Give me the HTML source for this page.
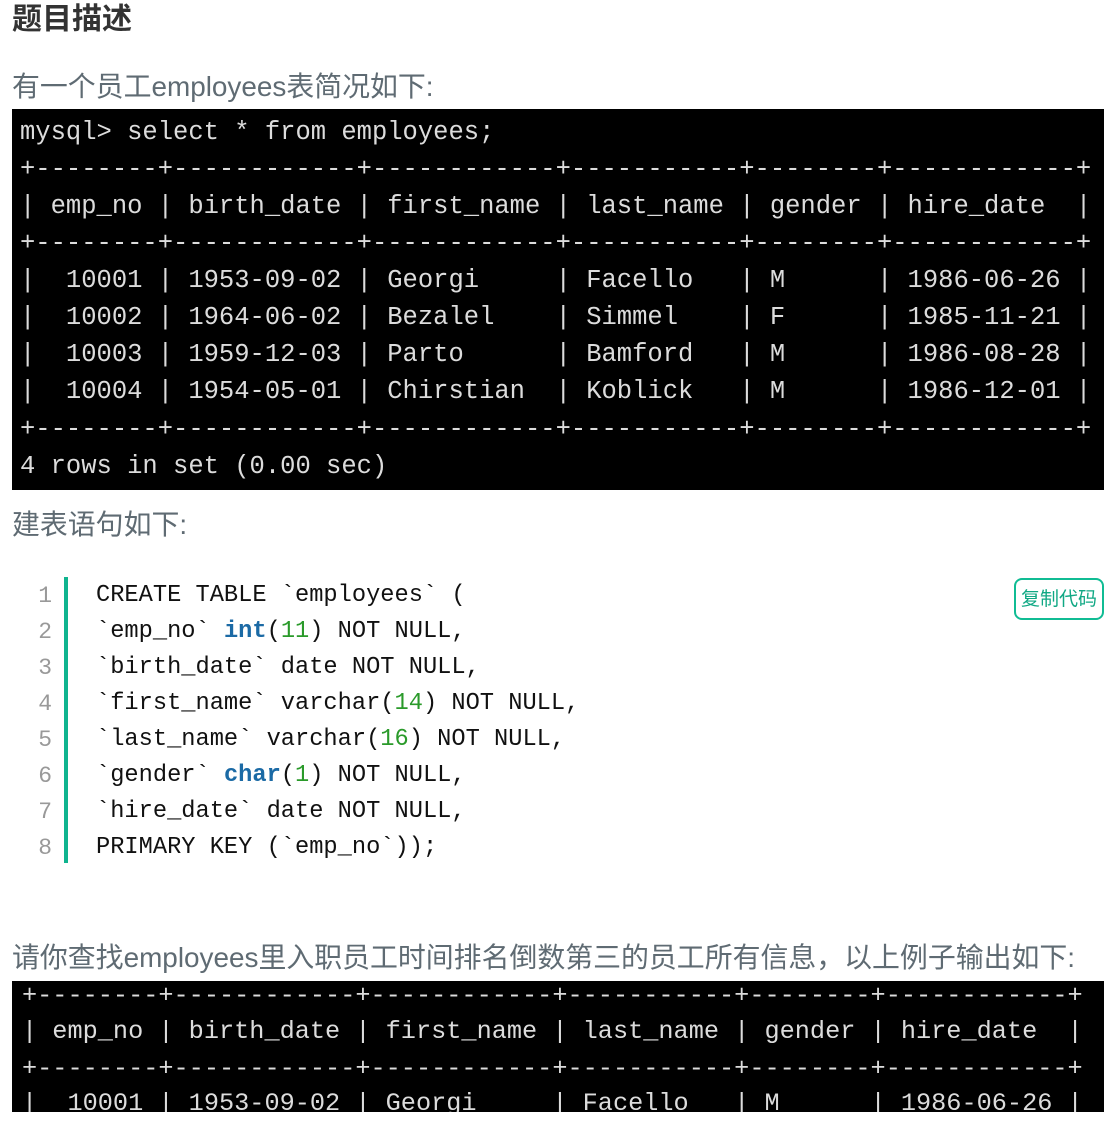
<!DOCTYPE html>
<html><head><meta charset="utf-8"><style>
body{margin:0;width:1104px;height:1122px;background:#fff;position:relative;overflow:hidden;font-family:"Liberation Sans","Noto Sans CJK SC",sans-serif}
.a{position:absolute;white-space:pre}
h1{position:absolute;left:12px;top:0;margin:0;font-size:30px;line-height:40px;color:#333;font-weight:bold}
.t{position:absolute;left:12px;font-size:27.9px;line-height:36px;color:#5f6b73;white-space:pre}
.term{position:absolute;left:12px;width:1092px;background:#000;overflow:hidden}
.term .a{color:#dcdcdc;font-family:"Liberation Mono",monospace;font-size:25.5px;line-height:37px;left:8px}
.term2 .a{font-size:25.25px;left:10px}
.code .a{font-family:"Liberation Mono",monospace;font-size:23.7px;line-height:36px;color:#111}
.ln{position:absolute;width:40px;text-align:right;left:12px;font-family:"Liberation Mono",monospace;font-size:23px;line-height:36px;color:#999}
.k{color:#1b6aa5;font-weight:bold}.n{color:#2a9a2a}
</style></head><body>
<h1>题目描述</h1>
<div class="t" style="top:69px">有一个员工employees表简况如下:</div>
<div class="term" style="top:109px;height:381px">
<div class="a" style="top:5px">mysql&gt; select * from employees;</div>
<div class="a" style="top:42px">+--------+------------+------------+-----------+--------+------------+</div>
<div class="a" style="top:79px">| emp_no | birth_date | first_name | last_name | gender | hire_date  |</div>
<div class="a" style="top:116px">+--------+------------+------------+-----------+--------+------------+</div>
<div class="a" style="top:153px">|  10001 | 1953-09-02 | Georgi     | Facello   | M      | 1986-06-26 |</div>
<div class="a" style="top:190px">|  10002 | 1964-06-02 | Bezalel    | Simmel    | F      | 1985-11-21 |</div>
<div class="a" style="top:227px">|  10003 | 1959-12-03 | Parto      | Bamford   | M      | 1986-08-28 |</div>
<div class="a" style="top:264px">|  10004 | 1954-05-01 | Chirstian  | Koblick   | M      | 1986-12-01 |</div>
<div class="a" style="top:302px">+--------+------------+------------+-----------+--------+------------+</div>
<div class="a" style="top:339px">4 rows in set (0.00 sec)</div>
</div>
<div class="t" style="top:507px">建表语句如下:</div>
<div class="code">
<div style="position:absolute;left:64px;top:577px;width:4px;height:286px;background:#0fb48f"></div>
<div class="ln" style="top:578px">1</div><div class="ln" style="top:614px">2</div><div class="ln" style="top:650px">3</div><div class="ln" style="top:686px">4</div><div class="ln" style="top:722px">5</div><div class="ln" style="top:758px">6</div><div class="ln" style="top:794px">7</div><div class="ln" style="top:830px">8</div>
<div class="a" style="left:96px;top:578px">CREATE TABLE `employees` (</div>
<div class="a" style="left:96px;top:614px">`emp_no` <span class="k">int</span>(<span class="n">11</span>) NOT NULL,</div>
<div class="a" style="left:96px;top:650px">`birth_date` date NOT NULL,</div>
<div class="a" style="left:96px;top:686px">`first_name` varchar(<span class="n">14</span>) NOT NULL,</div>
<div class="a" style="left:96px;top:722px">`last_name` varchar(<span class="n">16</span>) NOT NULL,</div>
<div class="a" style="left:96px;top:758px">`gender` <span class="k">char</span>(<span class="n">1</span>) NOT NULL,</div>
<div class="a" style="left:96px;top:794px">`hire_date` date NOT NULL,</div>
<div class="a" style="left:96px;top:830px">PRIMARY KEY (`emp_no`));</div>
</div>
<div style="position:absolute;left:1014px;top:578px;width:86px;height:38px;border:2px solid #10bc94;border-radius:8px;color:#10a884;font-size:19px;line-height:40px;text-align:center;white-space:nowrap;overflow:hidden">复制代码</div>
<div class="t" style="top:940px">请你查找employees里入职员工时间排名倒数第三的员工所有信息，以上例子输出如下:</div>
<div class="term term2" style="top:981px;height:131px">
<div class="a" style="top:-4px">+--------+------------+------------+-----------+--------+------------+</div>
<div class="a" style="top:32px">| emp_no | birth_date | first_name | last_name | gender | hire_date  |</div>
<div class="a" style="top:69px">+--------+------------+------------+-----------+--------+------------+</div>
<div class="a" style="top:104px">|  10001 | 1953-09-02 | Georgi     | Facello   | M      | 1986-06-26 |</div>
</div>
</body></html>
